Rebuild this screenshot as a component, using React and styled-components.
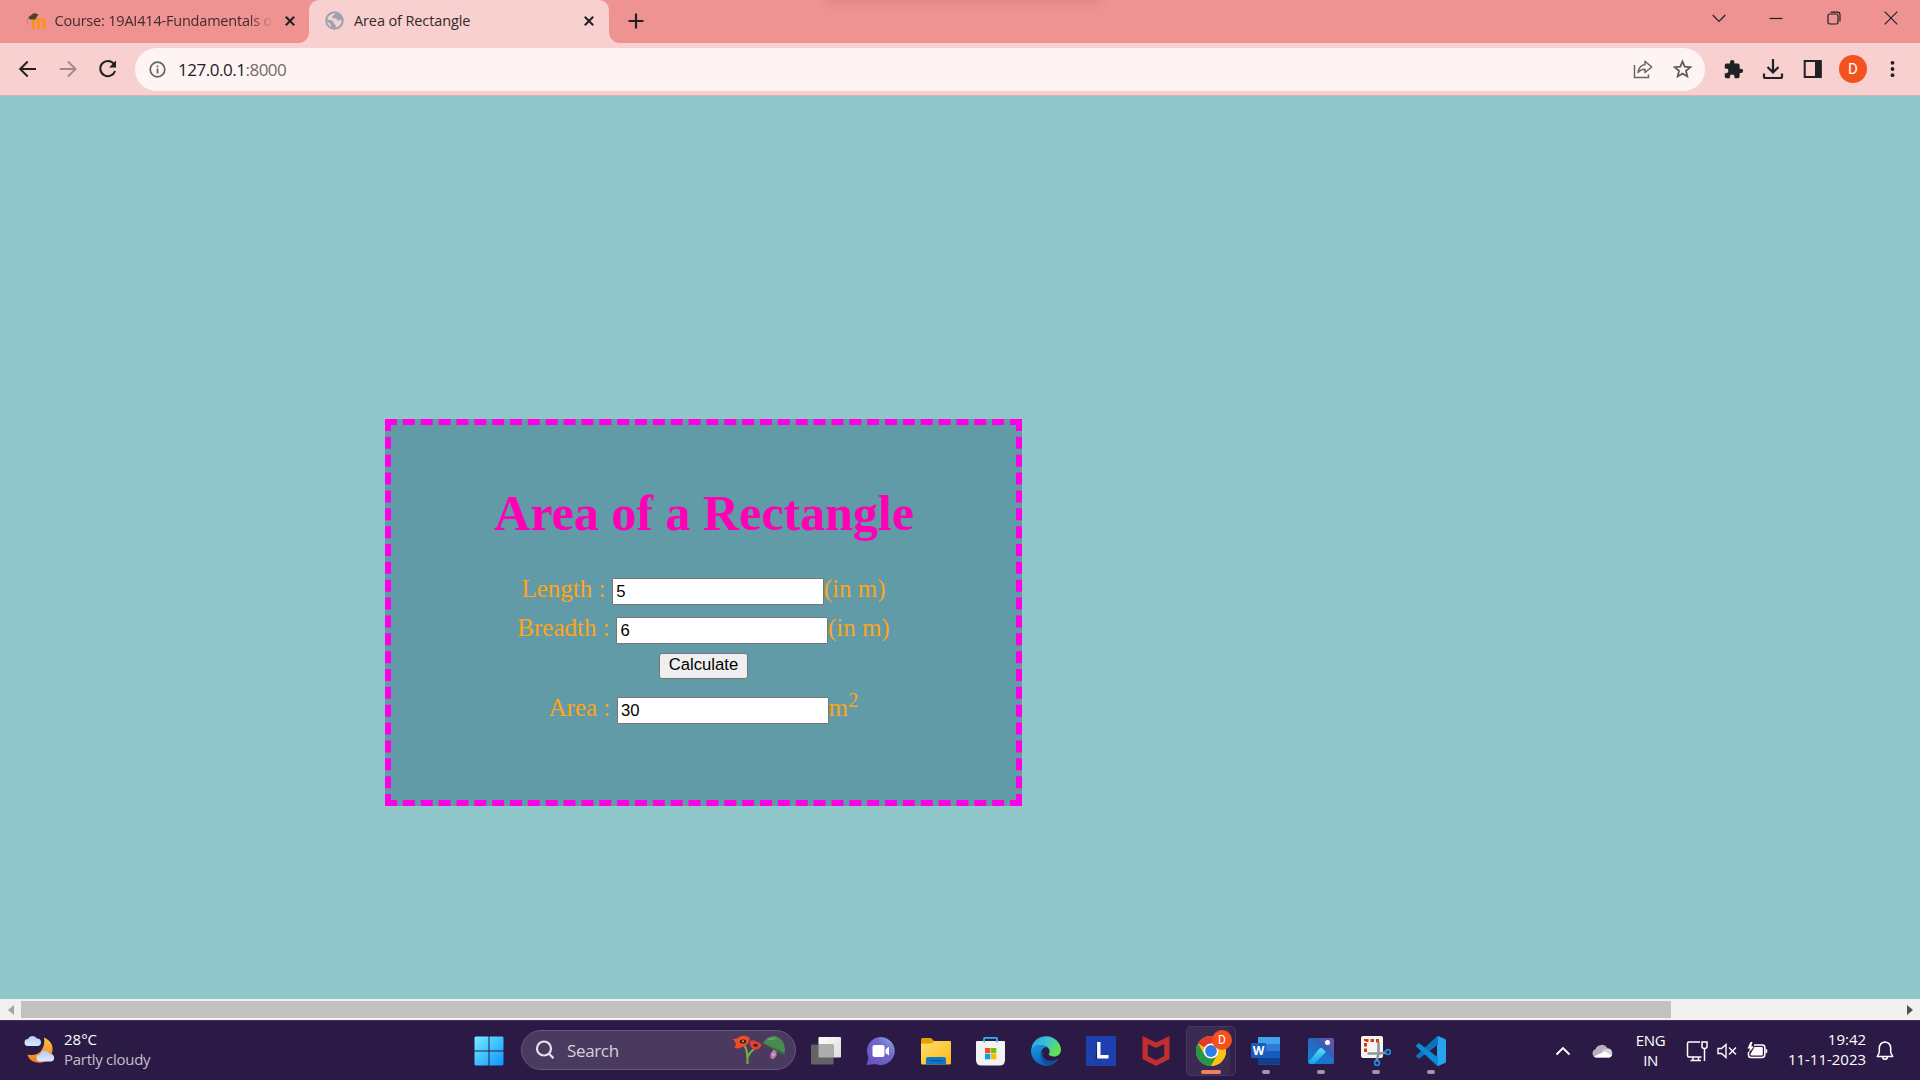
import React from "react";
import styled, { createGlobalStyle } from "styled-components";

const Global = createGlobalStyle`
  * { box-sizing: border-box; }
  html, body { margin: 0; padding: 0; overflow: hidden; }
  svg { display: block; flex: none; }
`;

const ui = `"Open Sans", "Noto Sans", sans-serif`;

const Screen = styled.div`
  width: 1920px;
  height: 1080px;
  display: flex;
  flex-direction: column;
  overflow: hidden;
  font-family: ${ui};
`;

/* ---------- Tab strip ---------- */

const TabStrip = styled.header`
  position: relative;
  height: 43px;
  display: flex;
  align-items: stretch;
  background: #ee9392;
  flex: none;
`;

const TopShade = styled.div`
  position: absolute;
  left: 826px;
  top: -6px;
  width: 274px;
  height: 6px;
  box-shadow: 0 0 12px 0 rgba(90, 30, 30, 0.22);
`;

const Tab = styled.div`
  position: relative;
  width: ${(p) => p.$width}px;
  display: flex;
  align-items: center;
  padding: 0 ${(p) => p.$end}px 2px ${(p) => p.$inset}px;
  background: ${(p) => (p.$active ? "#f8d0cf" : "transparent")};
  border-radius: 10px 10px 0 0;
  color: ${(p) => (p.$active ? "#33292b" : "#432a2c")};
  ${(p) =>
    p.$active &&
    `
    &::before, &::after {
      content: "";
      position: absolute;
      bottom: 0;
      width: 10px;
      height: 10px;
    }
    &::before { left: -10px; background: radial-gradient(circle at 0 0, transparent 9.5px, #f8d0cf 10px); }
    &::after { right: -10px; background: radial-gradient(circle at 100% 0, transparent 9.5px, #f8d0cf 10px); }
  `}
`;

const TabTitle = styled.span`
  flex: 1;
  min-width: 0;
  margin: 0 13px 0 ${(p) => p.$gap}px;
  overflow: hidden;
  white-space: nowrap;
  font-size: 14.5px;
  line-height: 22px;
  letter-spacing: ${(p) => p.$track}px;
  ${(p) => p.$fade && `mask-image: linear-gradient(90deg, #000 90%, transparent 101%);`}
`;

const NewTab = styled.div`
  width: 54px;
  display: flex;
  align-items: center;
  justify-content: center;
  padding-bottom: 1px;
`;

const WindowControls = styled.div`
  display: flex;
  margin-left: auto;
  padding-bottom: 7px;
`;

const WindowButton = styled.div`
  width: 57.5px;
  display: flex;
  align-items: center;
  justify-content: center;
`;

/* ---------- Toolbar ---------- */

const Toolbar = styled.div`
  height: 53px;
  flex: none;
  display: flex;
  align-items: center;
  padding: 0 7px 0 8px;
  background: #f8d0cf;
  border-bottom: 1px solid #d7b1b3;
`;

const ToolSlot = styled.div`
  width: 40px;
  height: 40px;
  display: flex;
  align-items: center;
  justify-content: center;
`;

const AddressBar = styled.div`
  flex: 1;
  height: 43px;
  margin: 0 8px 0 7px;
  padding: 0 2px 0 14px;
  display: flex;
  align-items: center;
  border-radius: 22px;
  background: #fef4f4;
`;

const Url = styled.span`
  flex: 1;
  margin-left: 12px;
  padding-top: 1px;
  font-size: 17px;
  line-height: 24px;
  letter-spacing: -0.48px;
  color: #202124;
`;

const Port = styled.span`
  color: #74696b;
`;

const Avatar = styled.div`
  width: ${(p) => p.$size}px;
  height: ${(p) => p.$size}px;
  border-radius: 50%;
  display: flex;
  align-items: center;
  justify-content: center;
  background: #f4511e;
  color: #fff;
  font: 400 ${(p) => p.$font}px Roboto, sans-serif;
`;

/* ---------- Page ---------- */

const Page = styled.main`
  flex: 1;
  padding: 323px 0 0 385px;
  background: #91c6ca;
`;

const Card = styled.section`
  width: 637px;
  height: 387px;
  display: flex;
  flex-direction: column;
  align-items: center;
  padding-top: 59px;
  border: 6px dashed #ff00e6;
  background: #619ba8;
  font-family: "Liberation Serif", serif;
  color: #ffa517;
`;

const Heading = styled.h1`
  margin: 0 0 27px;
  padding-left: 1px;
  font-size: 50px;
  line-height: 58px;
  font-weight: 700;
  color: #ff00b4;
`;

const Row = styled.div`
  height: 39px;
  font-size: 25px;
  line-height: 39px;
  white-space: pre;
`;

const Field = styled.input`
  width: 212px;
  height: 27px;
  margin: 0;
  padding: 2px 4px 0 3.5px;
  border: 1px solid #767676;
  border-radius: 1px;
  background: #fff;
  color: #000;
  font: 16.67px "Liberation Sans", sans-serif;
`;

const Sup = styled.sup`
  font-size: 20.8px;
  line-height: 0;
  vertical-align: 9px;
`;

const CalcButton = styled.button`
  width: 89px;
  height: 26px;
  margin: 6px 0 9px;
  padding: 0 0 2px;
  border: 1px solid #767676;
  border-radius: 3px;
  background: #efefef;
  color: #000;
  font: 16.67px/22px "Liberation Sans", sans-serif;
`;

/* ---------- Scrollbar ---------- */

const Scrollbar = styled.div`
  height: 21px;
  flex: none;
  display: flex;
  align-items: center;
  background: #f0f0f0;
`;

const Thumb = styled.div`
  width: 1650px;
  height: 17px;
  background: #c1c1c1;
`;

const ScrollArrow = styled.div`
  width: 21px;
  display: flex;
  justify-content: center;
  ${(p) => p.$end && "margin-left: auto;"}
`;

/* ---------- Taskbar ---------- */

const Taskbar = styled.footer`
  height: 60px;
  flex: none;
  display: flex;
  align-items: stretch;
  background: #2c1a46;
  border-top: 1px solid #443358;
  color: #fff;
`;

const Weather = styled.div`
  width: 461.5px;
  display: flex;
  align-items: center;
  padding: 0 0 4px 24px;
  gap: 9px;
`;

const Lines = styled.div`
  display: flex;
  flex-direction: column;
  align-items: ${(p) => p.$align || "flex-start"};
  padding-bottom: ${(p) => p.$lift || 0}px;
  font-size: 15px;
  line-height: 20px;
  white-space: nowrap;
  letter-spacing: ${(p) => p.$track || 0}px;
`;

const Dim = styled.span`
  color: #c5bfcd;
  letter-spacing: -0.28px;
`;

const AppSlot = styled.div`
  position: relative;
  width: 55px;
  display: flex;
  align-items: center;
  justify-content: center;
`;

const ActiveTile = styled.div`
  position: relative;
  width: 50px;
  height: 50px;
  display: flex;
  align-items: center;
  justify-content: center;
  border-radius: 5px;
  background: #3b2b52;
  border: 1px solid #473860;
  box-shadow: inset -5px 0 0 #33234a;
`;

const Indicator = styled.i`
  position: absolute;
  bottom: 6px;
  left: 50%;
  width: ${(p) => (p.$active ? 20 : 8)}px;
  height: 4px;
  transform: translateX(-50%);
  border-radius: 2px;
  background: ${(p) => (p.$active ? "#f2805f" : "#a197ab")};
`;

const Badge = styled.div`
  position: absolute;
  right: 3px;
  top: 3px;
`;

const SearchBox = styled.div`
  width: 275px;
  height: 40px;
  margin: 9px 2.5px 0 4.5px;
  padding: 0 8px 0 13px;
  display: flex;
  align-items: center;
  border: 1px solid #66577a;
  border-radius: 20px;
  background: #4a3a5f;
`;

const SearchText = styled.span`
  flex: 1;
  margin-left: 12px;
  padding-top: 1px;
  font-size: 17px;
  line-height: 24px;
  letter-spacing: -0.35px;
  color: #d6d0dc;
`;

const Tray = styled.div`
  display: flex;
  align-items: center;
  margin-left: auto;
  padding-right: 25px;
`;

const TraySlot = styled.div`
  width: ${(p) => p.$w}px;
  margin-right: ${(p) => p.$gap || 0}px;
  display: flex;
  align-items: center;
  justify-content: ${(p) => p.$justify || "center"};
`;

/* ---------- Small icons ---------- */

const Line = ({ size = 20, w = 2, color = "#202124", vb = size, children }) => (
  <svg width={size} height={size} viewBox={`0 0 ${vb} ${vb}`} fill="none" stroke={color} strokeWidth={w}>
    {children}
  </svg>
);

const CloseX = () => (
  <Line size={12} w={2}>
    <path d="M1.800 1.800l8.400 8.400M10.200 1.800l-8.400 8.400" />
  </Line>
);

const Moodle = () => (
  <svg width="20" height="18" viewBox="0 0 20 18">
    <path d="M7.300 17.500V10Q7.300 7.500 9.800 7.500T12.500 10V17.500M12.500 10Q12.500 7.500 15.200 7.500T18 10V17.500" fill="none" stroke="#f7931e" strokeWidth="3" />
    <path d="M2 5.500L8 1L12.500 2.500L9 7.500L4 7.500Z" fill="#4b3f3c" />
    <path d="M2 6Q1 9 1.500 13" fill="none" stroke="#d97f5f" strokeWidth="1" />
  </svg>
);

const Globe = () => (
  <svg width="19" height="19" viewBox="0 0 19 19">
    <circle cx="9.5" cy="9.5" r="9.3" fill="#9aa4ad" />
    <path d="M10.5 2.2C8.6 3 9.6 4.2 8 4.8S7.2 7 9 7.2s3 .2 3.2 1.8S14 9.8 14.6 9s2 .2 2.1 1c-.4 3-2.3 5.5-5.7 6.6-.7-1 .2-2-.8-2.8s-1.800-.7-1.600-2.200S6.600 9 5 9.200L2.200 8.300C3 5 6 1.900 10.500 2.200Z" fill="#f8d0cf" />
    <path d="M2.300 10.500l3 2.600.9 3.200C4 15 2.500 13 2.300 10.500Z" fill="#f8d0cf" />
  </svg>
);

const Puzzle = () => (
  <svg width="21" height="21" viewBox="0 0 24 24" fill="#202124">
    <path d="M20.500 11H19V7a2 2 0 0 0-2-2h-4V3.500a2.500 2.500 0 0 0-5 0V5H4a2 2 0 0 0-2 2v3.800h1.500a2.700 2.700 0 0 1 0 5.400H2V20a2 2 0 0 0 2 2h3.800v-1.500a2.700 2.700 0 0 1 5.400 0V22H17a2 2 0 0 0 2-2v-4h1.500a2.500 2.500 0 0 0 0-5z" />
  </svg>
);

/* ---------- Taskbar icons ---------- */

const App30 = ({ children }) => (
  <svg width="30" height="30" viewBox="0 0 30 30">
    {children}
  </svg>
);

const WeatherIcon = () => (
  <svg width="31" height="30" viewBox="0 0 31 30">
    <defs>
      <linearGradient id="moon" x1="0" y1="0" x2="0" y2="1">
        <stop offset="0" stopColor="#f9c440" />
        <stop offset="1" stopColor="#f47b20" />
      </linearGradient>
      <linearGradient id="cloud" x1="0" y1="0" x2="0" y2="1">
        <stop offset="0" stopColor="#b2cdf8" />
        <stop offset="1" stopColor="#dce9fd" />
      </linearGradient>
    </defs>
    <path d="M20 3.500C27 6.500 30 12 28 19C26 26 20 29.500 14 28.500C8 28 4.500 25 3.500 20.500C9 22 14 20.500 17 17C20 13 21 8 20 3.500Z" fill="url(#moon)" />
    <path d="M4 12a3.500 3.500 0 0 1 0-7A5 5 0 0 1 13 4.500a3.800 3.800 0 0 1 1 7.500Z" fill="url(#cloud)" />
    <path d="M16 27.500a3.500 3.500 0 0 1 0-7A5 5 0 0 1 25.500 20A3.800 3.800 0 0 1 27 27.500Z" fill="url(#cloud)" />
  </svg>
);

const Windows = () => (
  <App30>
    <defs>
      <linearGradient id="win" x1="0" y1="0" x2="1" y2="1">
        <stop offset="0" stopColor="#73efff" />
        <stop offset="1" stopColor="#0a93ff" />
      </linearGradient>
    </defs>
    <path d="M1.500 .5H14.500V14.500H.5V1.500ZM15.500 .5H28.500L29.500 1.500V14.500H15.500ZM.5 15.500H14.500V29.500H1.500L.5 28.500ZM15.500 15.500H29.500V28.500L28.500 29.500H15.500Z" fill="url(#win)" />
  </App30>
);

const Poppies = () => (
  <svg width="56" height="30" viewBox="0 0 56 30">
    <path d="M13 10Q17 15 16.500 29M24 13Q19 17 16.500 22" fill="none" stroke="#6fae3c" strokeWidth="2.200" />
    <path d="M1.500 4Q6 4.500 8 2Q13-.3 17.500 2Q20 4 17.500 7.500Q15 11.500 10 12.500Q4.500 14.500 3.500 12Q7 9.500 1.500 4Z" fill="#ee4a2c" />
    <path d="M19 6.500Q22 4 25 6.500Q30.500 7.500 30.500 10.500Q28 15.500 23 14.500Q18 12 19 6.500Z" fill="#e8402a" />
    <ellipse cx="12" cy="6.500" rx="3.200" ry="1.900" fill="#33202a" />
    <circle cx="12" cy="6.300" r="1" fill="#e6b63c" />
    <ellipse cx="24.500" cy="10.300" rx="2.300" ry="1.400" fill="#33202a" />
    <path d="M44.500 14L41 23.500" stroke="#d98c94" strokeWidth="4" />
    <circle cx="42.500" cy="19.500" r="2.800" fill="#c79ac4" stroke="#a0608c" />
    <path d="M32 8Q36 .8 44 1Q53 3.500 54 14L53.500 20Q43 15 32 8Z" fill="#4a8a52" />
    <path d="M36 5Q41 1.500 46 3.300Q42 5.500 36 5Z" fill="#6ba86c" />
    <path d="M32 8Q42 12.500 53.800 18L53.500 20Q43 16 32 8Z" fill="#2f6b3f" />
  </svg>
);

const TaskView = () => (
  <App30>
    <defs>
      <linearGradient id="tv" x1="0" y1="0" x2="1" y2="1">
        <stop offset="0" stopColor="#ffffff" />
        <stop offset="1" stopColor="#dcdcdc" />
      </linearGradient>
    </defs>
    <rect x="7.500" y="1" width="22.500" height="20.500" rx="1" fill="url(#tv)" />
    <rect x="0" y="8.500" width="22.500" height="20" rx="1" fill="#636264" />
    <rect x="7.500" y="8.500" width="15" height="13" fill="#adadad" />
  </App30>
);

const Chat = () => (
  <App30>
    <defs>
      <linearGradient id="chat" x1="0" y1="1" x2="1" y2="0">
        <stop offset="0" stopColor="#6a4fc4" />
        <stop offset=".6" stopColor="#6e68c9" />
        <stop offset="1" stopColor="#8db0e8" />
      </linearGradient>
    </defs>
    <path d="M15 1A14 14 0 1 1 9.500 28L.5 29L2.500 21.500A14 14 0 0 1 15 1Z" fill="url(#chat)" />
    <rect x="6.500" y="9" width="12" height="12" rx="2" fill="#fff" />
    <path d="M19.500 13.500L23 10.500V19.500L19.500 17Z" fill="#fff" />
  </App30>
);

const Folder = () => (
  <App30>
    <defs>
      <linearGradient id="fold" x1="0" y1="0" x2="1" y2="1">
        <stop offset="0" stopColor="#ffdc6b" />
        <stop offset="1" stopColor="#fbb91c" />
      </linearGradient>
    </defs>
    <path d="M0 3.500Q0 2 1.500 2H10L13.500 5.500V10H0Z" fill="#e2a104" />
    <path d="M0 7.500H10.500L13.500 5H29Q30 5 30 6V27Q30 28.500 28.500 28.500H1.500Q0 28.500 0 27Z" fill="url(#fold)" />
    <path d="M5 28.500V23Q5 21 7 21H23Q25 21 25 23V28.500Z" fill="#0f77c8" />
    <path d="M8.500 24.700H21.500" stroke="#0a4f8e" strokeWidth="1" />
  </App30>
);

const Store = () => (
  <App30>
    <path d="M8 7V2.500Q8 1.800 8.700 1.800H20.300Q21 1.800 21 2.500V7" fill="none" stroke="#2fb4ea" strokeWidth="1.800" />
    <path d="M1 5H28Q29 5 29 6V24Q29 29.500 23.500 29.500H5.500Q0 29.500 0 24V6Q0 5 1 5Z" fill="#f2f2f2" />
    <path d="M7.500 6.500V4H9V6.500M20 6.500V4H21.500V6.500" fill="#2fb4ea" />
    <rect x="9" y="12" width="5.300" height="5.300" fill="#f25022" />
    <rect x="15" y="12" width="5.300" height="5.300" fill="#7fba00" />
    <rect x="9" y="18" width="5.300" height="5.300" fill="#00a4ef" />
    <rect x="15" y="18" width="5.300" height="5.300" fill="#ffb900" />
  </App30>
);

const Edge = () => (
  <App30>
    <defs>
      <linearGradient id="eg1" x1="0" y1="0" x2="1" y2=".5">
        <stop offset="0" stopColor="#2b9fe0" />
        <stop offset=".5" stopColor="#35c2d8" />
        <stop offset="1" stopColor="#63e04e" />
      </linearGradient>
      <linearGradient id="eg2" x1="0" y1="0" x2=".5" y2="1">
        <stop offset="0" stopColor="#1b9de2" />
        <stop offset="1" stopColor="#0a62c4" />
      </linearGradient>
    </defs>
    <path d="M1 10A15 15 0 0 1 30 13.500C30 18 27 20.500 23 20.500C19 20.500 17 19 18 17.500C19.500 15.500 18.500 12.500 16 11C11 8 3 9 0 15Z" fill="url(#eg1)" />
    <path d="M0 15C1 8 11 7 16 11C12 11 9.500 15 10 19C11 24 16 28.500 21 28.500A15 15 0 0 1 0 15Z" fill="url(#eg2)" />
    <path d="M12 15C10.500 24 18 27.500 28 22.500A15 15 0 0 1 19 29.400C12 29 9 23 10 18.500Q10.500 16 12 15Z" fill="#114f9c" />
  </App30>
);

const LApp = () => (
  <App30>
    <rect width="30" height="30" fill="#1e3fae" />
    <path d="M11 7L9.500 22.500L12 23V9Z" fill="#0d2a52" />
    <path d="M12.800 6V20.700H22.500" fill="none" stroke="#fff" strokeWidth="3.400" />
  </App30>
);

const McAfee = () => (
  <App30>
    <path d="M1.500 0L15 6.500L28.500 0V23L15 30L1.500 23ZM6.800 8V20L15 24.200L23.200 20V8L15 12Z" fill="#c22d2d" fillRule="evenodd" />
  </App30>
);

const Chrome = () => (
  <App30>
    <circle cx="15" cy="15" r="15" fill="#fbc116" />
    <path d="M15 15L2 7.500A15 15 0 0 1 28 7.500H15Z" fill="#e33b2e" />
    <path d="M2 7.500A15 15 0 0 0 15 30L21.500 18.700L8.500 18.700Z" fill="#24974a" />
    <path d="M15 30A15 15 0 0 0 28 7.500H15L21.500 18.700Z" fill="#fbc116" />
    <circle cx="15" cy="15" r="7.500" fill="#fff" />
    <circle cx="15" cy="15" r="5.900" fill="#2f7de8" />
  </App30>
);

const LetterTile = styled.div`
  position: relative;
  display: flex;
`;

const Letter = styled.span`
  position: absolute;
  left: 0;
  top: 7px;
  width: 15px;
  text-align: center;
  font: 700 12px/15px "Open Sans", sans-serif;
  color: #fff;
`;

const Word = () => (
  <LetterTile>
    <App30>
      <rect x="7" y="1" width="22" height="27.500" rx="1" fill="#2b7cd3" />
      <path d="M7 2Q7 1 8 1H28Q29 1 29 2V8H7Z" fill="#41a5ee" />
      <rect x="7" y="15" width="22" height="7" fill="#185abd" />
      <path d="M7 22H29V27.500Q29 28.500 28 28.500H8Q7 28.500 7 27.500Z" fill="#103f91" />
      <rect x="0" y="7" width="15" height="15" rx="1" fill="#1a5cbe" />
    </App30>
    <Letter>W</Letter>
  </LetterTile>
);

const Photos = () => (
  <App30>
    <defs>
      <linearGradient id="ph" x1="0" y1="1" x2="1" y2="0">
        <stop offset="0" stopColor="#1486dc" />
        <stop offset=".6" stopColor="#2b62b8" />
        <stop offset="1" stopColor="#7a4fa8" />
      </linearGradient>
      <linearGradient id="ph2" x1="0" y1="0" x2="0" y2="1">
        <stop offset="0" stopColor="#5cdcf8" />
        <stop offset="1" stopColor="#12a0ec" />
      </linearGradient>
    </defs>
    <rect x="2" y="2" width="26" height="26" rx="2" fill="url(#ph)" />
    <path d="M2.500 25.500L13 13Q15 11 17 13L28 24V26Q28 28 26 28H4Q2.500 28 2.500 25.500Z" fill="#1c74d0" />
    <path d="M2.500 26L13 13Q15 11 17 13L20 16L8 28H4Z" fill="url(#ph2)" />
    <circle cx="21.500" cy="6.500" r="2.500" fill="#fff" />
  </App30>
);

const Snip = () => (
  <App30>
    <rect x="0" y="0" width="22" height="22" rx="2" fill="#f4f4f4" />
    <path d="M4.500 16V4.500H16.500V7" fill="none" stroke="#d83b01" strokeWidth="3" strokeDasharray="3.500 2" />
    <path d="M17.500 6V18L15.500 25M6.500 17.500H19L25 16.500" fill="none" stroke="#8f9699" strokeWidth="2.600" />
    <circle cx="16" cy="27" r="2.400" fill="none" stroke="#1f8fe0" strokeWidth="1.700" />
    <circle cx="27" cy="16" r="2.400" fill="none" stroke="#1f8fe0" strokeWidth="1.700" />
  </App30>
);

const Code = () => (
  <App30>
    <path d="M22 0L29 3Q30 3.500 30 4.500V25.500Q30 26.500 29 27L22 30L21 29V1Z" fill="#27a4f0" />
    <path d="M22 0V8.500L3.500 22.500Q2.800 23 2 22.300L.4 20.800Q-.3 20 .4 19.300L20.500 .8Z" fill="#0a74bd" />
    <path d="M22 30V21.500L3.500 7.500Q2.800 7 2 7.700L.4 9.200Q-.3 10 .4 10.700L20.500 29.200Z" fill="#0d8ad6" />
  </App30>
);

const apps = [
  { id: "taskview", Icon: TaskView },
  { id: "chat", Icon: Chat },
  { id: "folder", Icon: Folder },
  { id: "store", Icon: Store },
  { id: "edge", Icon: Edge },
  { id: "l", Icon: LApp },
  { id: "mcafee", Icon: McAfee },
  { id: "chrome", Icon: Chrome, active: true },
  { id: "word", Icon: Word, open: true },
  { id: "photos", Icon: Photos, open: true },
  { id: "snip", Icon: Snip, open: true },
  { id: "code", Icon: Code, open: true },
];

function BrowserTabs() {
  return (
    <TabStrip>
      <TopShade />
      <Tab $width={309} $inset={26} $end={13}>
        <Moodle />
        <TabTitle $gap={8.5} $track={-0.2} $fade>Course: 19AI414-Fundamentals o</TabTitle>
        <CloseX />
      </Tab>
      <Tab $width={300} $inset={16} $end={14.5} $active>
        <Globe />
        <TabTitle $gap={10} $track={-0.12}>Area of Rectangle</TabTitle>
        <CloseX />
      </Tab>
      <NewTab>
        <Line size={16} w={2.2}><path d="M8 .5V15.500M.5 8H15.500" /></Line>
      </NewTab>
      <WindowControls>
        <WindowButton><Line size={14} w={1.2}><path d="M.7 4L7 10.500L13.300 4" /></Line></WindowButton>
        <WindowButton><Line size={14} w={1.2}><path d="M.5 7.500H13.500" /></Line></WindowButton>
        <WindowButton>
          <Line size={14} w={1.2}>
            <rect x="1" y="3" width="10" height="10" rx="1.800" />
            <path d="M3.500 1.200H10.500Q13 1.200 13 3.700V10.500" />
          </Line>
        </WindowButton>
        <WindowButton><Line size={14} w={1.2}><path d="M.7 .7L13.300 13.300M13.300 .7L.7 13.300" /></Line></WindowButton>
      </WindowControls>
    </TabStrip>
  );
}

function BrowserToolbar() {
  return (
    <Toolbar>
      <ToolSlot><Line><path d="M18 10H2.500M9.700 2.500L2.200 10L9.700 17.500" /></Line></ToolSlot>
      <ToolSlot><Line color="#a18a8c"><path d="M1.700 10H17.300M10 2.500L17.500 10L10 17.500" /></Line></ToolSlot>
      <ToolSlot>
        <Line>
          <path d="M16 5A7.600 7.600 0 1 0 17.100 12" />
          <path d="M18 1.500V8.500H11Z" fill="#202124" stroke="none" />
        </Line>
      </ToolSlot>
      <AddressBar>
        <Line size={17} w={1.7} color="#5f6368">
          <circle cx="8.500" cy="8.500" r="7.300" />
          <path d="M8.500 7.500V12.500M8.500 4.500V6.200" />
        </Line>
        <Url>127.0.0.1<Port>:8000</Port></Url>
        <ToolSlot>
          <Line w={1.5} color="#6b6466">
            <path d="M1.500 6V18.500H15.500V15.500" />
            <path d="M12 2.200L18.700 8L12 13.500V10.200Q7.500 10.200 5 13.500Q6 6.500 12 5.500Z" strokeLinejoin="round" />
          </Line>
        </ToolSlot>
        <ToolSlot>
          <Line w={1.8} color="#5f5a5d">
            <path d="M9.500 2.500L11.700 7.700L17.300 8.200L13 11.900L14.300 17.400L9.500 14.500L4.700 17.400L6 11.900L1.700 8.200L7.300 7.700Z" />
          </Line>
        </ToolSlot>
      </AddressBar>
      <ToolSlot><Puzzle /></ToolSlot>
      <ToolSlot>
        <Line size={22} w={2.2}>
          <path d="M11 1V14M5.500 9L11 14.500L16.500 9M2 15.500V18.500Q2 20 3.500 20H18.500Q20 20 20 18.500V15.500" />
        </Line>
      </ToolSlot>
      <ToolSlot>
        <Line>
          <rect x="1.700" y="2" width="16" height="16" />
          <rect x="12" y="1" width="6.500" height="18" fill="#202124" stroke="none" />
        </Line>
      </ToolSlot>
      <ToolSlot><Avatar $size={28} $font={15}>D</Avatar></ToolSlot>
      <ToolSlot>
        <svg width="20" height="20" viewBox="0 0 20 20" fill="#202124">
          <circle cx="9.500" cy="3.800" r="1.900" />
          <circle cx="9.500" cy="10" r="1.900" />
          <circle cx="9.500" cy="16.200" r="1.900" />
        </svg>
      </ToolSlot>
    </Toolbar>
  );
}

function AreaForm() {
  return (
    <Card>
      <Heading>Area of a Rectangle</Heading>
      <Row>Length : <Field defaultValue="5" />(in m)</Row>
      <Row>Breadth : <Field defaultValue="6" />(in m)</Row>
      <CalcButton>Calculate</CalcButton>
      <Row>Area : <Field defaultValue="30" />m<Sup>2</Sup></Row>
    </Card>
  );
}

function SystemTray() {
  return (
    <Tray>
      <TraySlot $w={26}><Line size={16} w={1.9} color="#fff"><path d="M1.500 11.500L8 5L14.500 11.500" /></Line></TraySlot>
      <TraySlot $w={54}>
        <svg width="21" height="14" viewBox="0 0 21 14">
          <path d="M4.500 13.500A4.200 4.200 0 0 1 3.500 5.300A6.500 6.500 0 0 1 15.500 4.500A4.600 4.600 0 0 1 17 13.500Z" fill="#b7b0bf" />
          <path d="M10 6.500L15.500 4.600A4.600 4.600 0 0 1 17 13.500Z" fill="#d8d3dc" />
          <path d="M2 12.500L12.500 7.500L20 11.500Q19 13.500 17 13.500H4.500Q3 13.500 2 12.500Z" fill="#fff" />
        </svg>
      </TraySlot>
      <TraySlot $w={42} $gap={10}><Lines $align="center" $track={-0.4} $lift={2}><span>ENG</span><span>IN</span></Lines></TraySlot>
      <TraySlot $w={30}>
        <Line size={22} w={1.5} color="#fff">
          <path d="M14 2H3Q1.500 2 1.500 3.500V15.500Q1.500 17 3 17H15.500M7 17V20.500M12.500 17V20.500M4.500 20.500H15M18.500 8.500V21" />
          <path d="M16 2H21V6.500Q21 8.500 18.500 8.500T16 6.500Z" />
        </Line>
      </TraySlot>
      <TraySlot $w={30}>
        <Line size={20} w={1.4} color="#fff">
          <path d="M1 7.500H4.500L9 3.500V16.500L4.500 12.500H1ZM12 6.500L19 13.500M19 6.500L12 13.500" />
        </Line>
      </TraySlot>
      <TraySlot $w={32}>
        <svg width="21" height="18" viewBox="0 0 21 18">
          <path d="M7 3H15Q17.800 3 17.800 5.500V12.500Q17.800 15.500 15 15.500H4Q1.500 15.500 1.500 13V10" fill="none" stroke="#fff" strokeWidth="1.500" />
          <path d="M18.500 6.500Q20.500 7 20.500 9T18.500 11.500Z" fill="#fff" />
          <path d="M7.500 5H14.500Q15.800 5 15.800 6.300V12.200Q15.800 13.500 14.500 13.500H4.500Q3.500 13.500 3.500 12Z" fill="#fff" />
          <path d="M3.500 0L.5 6.500H3L1.500 11L7 4.500H4.300L5.500 0Z" fill="#fff" />
        </svg>
      </TraySlot>
      <TraySlot $w={92.5} $justify="flex-end"><Lines $align="flex-end" $track={-0.02} $lift={4}><span>19:42</span><span>11-11-2023</span></Lines></TraySlot>
      <TraySlot $w={29} $justify="flex-end">
        <Line size={20} w={1.5} color="#fff">
          <path d="M10 1Q4.300 1.500 4.300 7.500V11.500L2.300 15.500H17.700L15.700 11.500V7.500Q15.700 1.500 10 1ZM7.500 16Q8 18.300 10 18.300T12.500 16" strokeLinejoin="round" />
        </Line>
      </TraySlot>
    </Tray>
  );
}

function WindowsTaskbar() {
  return (
    <Taskbar>
      <Weather>
        <WeatherIcon />
        <Lines>
          <span>28°C</span>
          <Dim>Partly cloudy</Dim>
        </Lines>
      </Weather>
      <AppSlot><Windows /></AppSlot>
      <SearchBox>
        <Line size={20} w={2.2} color="#e6e2ea">
          <circle cx="9" cy="8.500" r="7" />
          <path d="M13.800 13.500L18.500 18.200" />
        </Line>
        <SearchText>Search</SearchText>
        <Poppies />
      </SearchBox>
      {apps.map(({ id, Icon, active, open }) => (
        <AppSlot key={id}>
          {active ? (
            <ActiveTile>
              <Icon />
              <Badge><Avatar $size={20} $font={12}>D</Avatar></Badge>
            </ActiveTile>
          ) : (
            <Icon />
          )}
          {(active || open) && <Indicator $active={active} />}
        </AppSlot>
      ))}
      <SystemTray />
    </Taskbar>
  );
}

export default function App() {
  return (
    <Screen>
      <Global />
      <BrowserTabs />
      <BrowserToolbar />
      <Page>
        <AreaForm />
      </Page>
      <Scrollbar>
        <ScrollArrow>
          <svg width="6" height="10" viewBox="0 0 6 10"><path d="M6 0V10L0 5Z" fill="#a3a3a3" /></svg>
        </ScrollArrow>
        <Thumb />
        <ScrollArrow $end>
          <svg width="6" height="10" viewBox="0 0 6 10"><path d="M0 0V10L6 5Z" fill="#505050" /></svg>
        </ScrollArrow>
      </Scrollbar>
      <WindowsTaskbar />
    </Screen>
  );
}
